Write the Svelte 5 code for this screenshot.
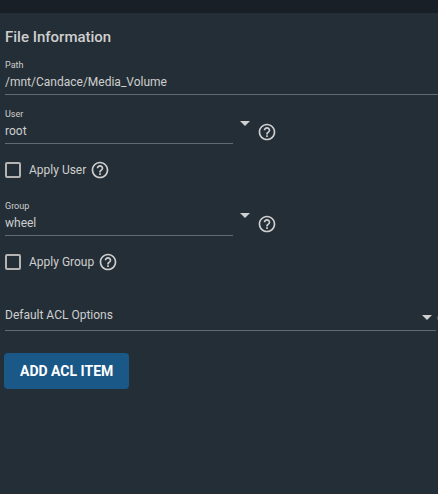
<script>
  let path = $state('/mnt/Candace/Media_Volume');
  let user = $state('root');
  let group = $state('wheel');
  let applyUser = $state(false);
  let applyGroup = $state(false);
  let aclOption = $state('');
</script>

{#snippet helpIcon()}
  <svg class="help-icon" viewBox="0 0 24 24" aria-hidden="true">
    <path d="M11 18h2v-2h-2v2zm1-16C6.48 2 2 6.48 2 12s4.48 10 10 10 10-4.48 10-10S17.52 2 12 2zm0 18c-4.41 0-8-3.59-8-8s3.59-8 8-8 8 3.59 8 8-3.59 8-8 8zm0-14c-2.21 0-4 1.79-4 4h2c0-1.1.9-2 2-2s2 .9 2 2c0 2-3 1.75-3 5h2c0-2.25 3-2.5 3-5 0-2.21-1.79-4-4-4z" />
  </svg>
{/snippet}

{#snippet arrow()}
  <svg class="arrow" viewBox="0 0 10 5" aria-hidden="true">
    <path d="M0 0h10L5 5z" />
  </svg>
{/snippet}

<div class="page">
  <main class="card">
    <h1>File Information</h1>

    <div class="field">
      <label for="path">Path</label>
      <input id="path" type="text" bind:value={path} />
    </div>

    <div class="combo-row user">
      <div class="field">
        <label for="user">User</label>
        <input id="user" type="text" bind:value={user} />
      </div>
      <button class="toggle" type="button" aria-label="Show users">{@render arrow()}</button>
      <button class="help" type="button" aria-label="User help">{@render helpIcon()}</button>
    </div>

    <div class="check-row">
      <label><input type="checkbox" bind:checked={applyUser} />Apply User</label>
      <button class="help" type="button" aria-label="Apply User help">{@render helpIcon()}</button>
    </div>

    <div class="combo-row">
      <div class="field">
        <label for="group">Group</label>
        <input id="group" type="text" bind:value={group} />
      </div>
      <button class="toggle" type="button" aria-label="Show groups">{@render arrow()}</button>
      <button class="help" type="button" aria-label="Group help">{@render helpIcon()}</button>
    </div>

    <div class="check-row">
      <label><input type="checkbox" bind:checked={applyGroup} />Apply Group</label>
      <button class="help" type="button" aria-label="Apply Group help">{@render helpIcon()}</button>
    </div>

    <div class="select-row">
      <div class="select-wrap">
        <select bind:value={aclOption} aria-label="Default ACL Options">
          <option value="">Default ACL Options</option>
        </select>
        {@render arrow()}
      </div>
      <button class="help" type="button" aria-label="Default ACL Options help">{@render helpIcon()}</button>
    </div>

    <button class="add" type="button">ADD ACL ITEM</button>
  </main>
</div>

<style>
  :global(body) {
    background: #181f27;
  }
  .page {
    box-sizing: border-box;
    display: flex;
    min-height: 100vh;
    padding-top: 13px;
    overflow: hidden;
    color: #cfcfcf;
    font-family: Roboto, sans-serif;
    font-size: 12px;
  }
  .card {
    flex: 1;
    min-width: 0;
    padding: 14px 0 20px 5px;
    background: #242e36;
  }
  h1 {
    margin: 0 0 12px;
    font-size: 15px;
    font-weight: 500;
    line-height: 20px;
  }
  .field label {
    display: block;
    font-size: 9px;
    line-height: 12px;
  }
  .field input,
  select {
    box-sizing: border-box;
    display: block;
    width: 100%;
    height: 24px;
    margin: 0;
    padding: 0 0 2px;
    border: 0;
    border-bottom: 1px solid #626b72;
    border-radius: 0;
    outline: 0;
    background: transparent;
    color: inherit;
    font: inherit;
  }
  button {
    padding: 0;
    border: 0;
    background: none;
    color: inherit;
    font: inherit;
    cursor: pointer;
  }
  svg {
    display: block;
    fill: currentColor;
  }
  .arrow {
    width: 10px;
    height: 5px;
  }
  .help-icon {
    width: 20px;
    height: 20px;
  }
  .combo-row {
    display: flex;
    align-items: flex-end;
  }
  .combo-row.user {
    margin-top: 13px;
  }
  .combo-row .field {
    flex: 0 1 228px;
  }
  .toggle {
    margin: 0 7px;
    padding-bottom: 18px;
  }
  .combo-row .help {
    padding-bottom: 2px;
  }
  .check-row {
    display: flex;
    align-items: center;
    gap: 4px;
    margin: 16px 0 20px;
  }
  .check-row label {
    display: flex;
    align-items: center;
    gap: 8px;
    line-height: 20px;
  }
  .check-row input {
    appearance: none;
    box-sizing: border-box;
    width: 16px;
    height: 16px;
    margin: 0;
    border: 2px solid #b4b4b4;
    border-radius: 2px;
  }
  .check-row input:checked {
    background: #1a5888;
  }
  .select-row {
    display: flex;
    align-items: center;
    margin-top: 32px;
  }
  .select-wrap {
    position: relative;
    flex: 1;
  }
  .select-wrap .arrow {
    position: absolute;
    top: 11px;
    right: 4px;
    pointer-events: none;
  }
  select {
    appearance: none;
    height: 27px;
    padding-bottom: 4px;
  }
  select option {
    background: #242e36;
  }
  /* the help icon runs past the right edge of the card */
  .select-row .help {
    width: 20px;
    margin-right: -18px;
  }
  .add {
    height: 36px;
    margin: 22px 0 0 -1px;
    padding: 0 16px;
    border-radius: 4px;
    background: #1a5888;
    color: #fff;
    font-size: 14px;
    font-weight: 700;
  }
</style>
